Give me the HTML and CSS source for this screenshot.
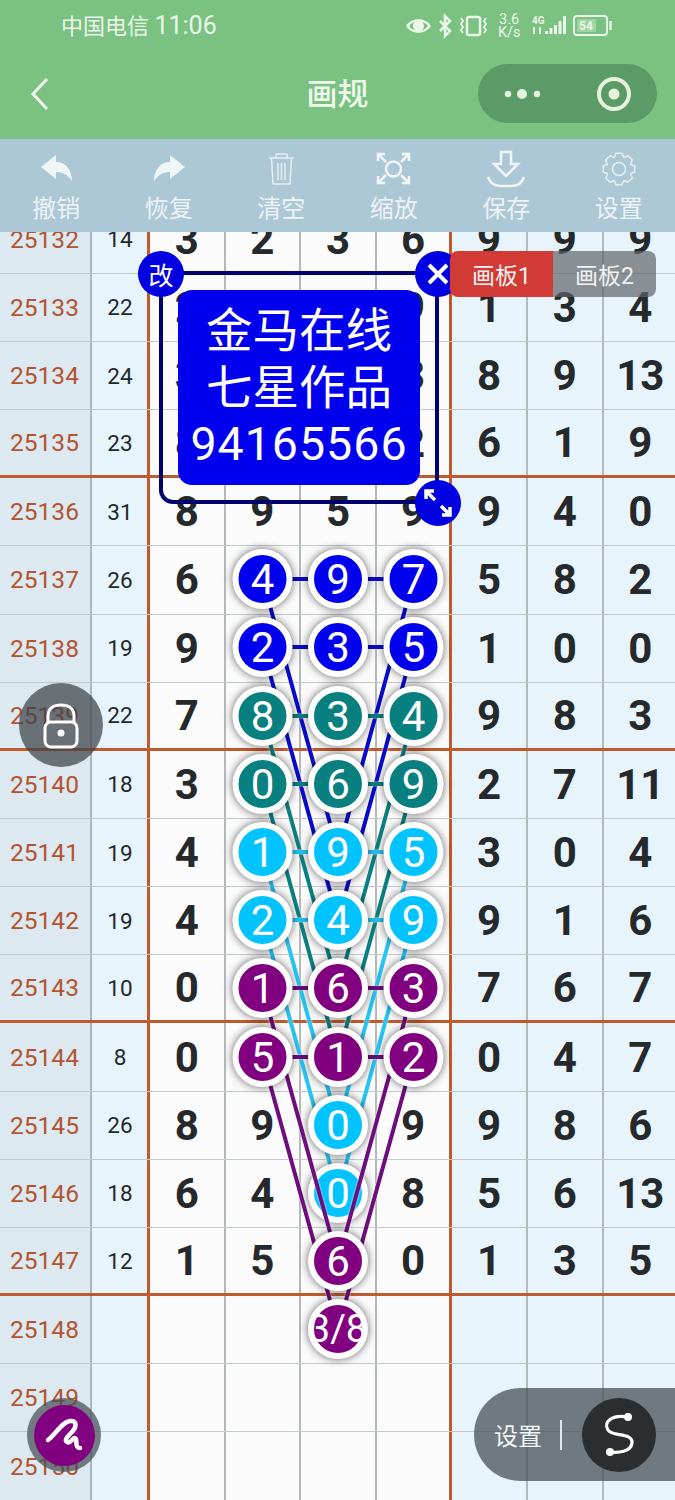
FILE: index.html
```html
<!DOCTYPE html>
<html lang="zh-CN">
<head>
<meta charset="utf-8">
<title>画规</title>
<link rel="stylesheet" href="styles.css">
</head>
<body>
<div class="app">
  <header class="head">
    <div class="status">
      <span class="carrier">中国电信 <span class="time">11:06</span></span>
      <svg class="status-icons" width="215" height="28" viewBox="405 11 215 28">
        <path class="si-fill" d="M408 25C413 16 428 16 433 25C428 34 413 34 408 25ZM411 25C415 31 426 31 430 25C426 19 415 19 411 25Z"/>
        <circle class="si-fill" cx="420.5" cy="25" r="5.5"/>
        <path class="si-line" d="M442 20L452 30L447 35V15L452 20L442 30"/>
        <rect class="si-line" x="469" y="16" width="13" height="18" rx="2"/>
        <path class="si-thin" d="M463 17l2 3-2 3 2 3-2 3 2 3M488 17l-2 3 2 3-2 3 2 3-2 3"/>
        <text class="si-text" x="501" y="23">3.6</text>
        <text class="si-text" x="500" y="36">K/s</text>
        <text class="si-tiny" x="534" y="23">4G</text>
        <path class="si-thin" d="M536 26v7M542 26v7"/>
        <path class="si-bars" d="M548.500 33v-3M553 33v-6M557.500 33v-9M562 33v-13M566.500 33v-18"/>
        <rect class="si-thin" x="576" y="15" width="33" height="19" rx="3"/>
        <rect class="si-batt" x="579" y="18" width="19" height="13" rx="1"/>
        <text class="si-tiny batt-num" x="581" y="29">54</text>
        <path class="si-line" d="M612.500 20v9"/>
      </svg>
    </div>
    <nav class="nav">
      <svg class="back" width="20" height="36" viewBox="0 0 20 36"><path d="M17 3L3 18L17 33"/></svg>
      <h1 class="title">画规</h1>
      <div class="capsule">
        <svg class="dots" width="40" height="14" viewBox="0 0 40 14">
          <circle cx="5" cy="7" r="3.200"/><circle cx="19" cy="7" r="5"/><circle cx="34" cy="7" r="3.200"/>
        </svg>
        <svg class="target" width="36" height="36" viewBox="0 0 36 36">
          <circle class="target-ring" cx="18" cy="18" r="15"/><circle class="target-dot" cx="18" cy="18" r="5.500"/>
        </svg>
      </div>
    </nav>
  </header>

  <div class="toolbar">
    <div class="tool">
      <svg width="40" height="38" viewBox="36 150 40 38"><path class="ti-fill" d="M41 167L56 155V162C66 162 72 170 72 181C67 174 62 172 56 172V179Z"/></svg>
      <span>撤销</span>
    </div>
    <div class="tool">
      <svg width="40" height="38" viewBox="148 150 40 38"><path class="ti-fill" d="M184 167L169 155V162C159 162 153 170 153 181C158 174 163 172 169 172V179Z"/></svg>
      <span>恢复</span>
    </div>
    <div class="tool">
      <svg width="40" height="38" viewBox="261 150 40 38"><path class="ti-thin" d="M269 158H294M276 158V154H287V158M271.500 158L273 184H290L291.500 158M278 163V180M281.500 163V180M285 163V180"/></svg>
      <span>清空</span>
    </div>
    <div class="tool">
      <svg width="40" height="38" viewBox="374 150 40 38"><circle class="ti-line" cx="393.500" cy="169" r="7.500"/><path class="ti-line" d="M378 161V154H385M378 154L386 162M409 161V154H402M409 154L401 162M378 176V183H385M378 183L386 175M409 176V183H402M409 183L401 175"/></svg>
      <span>缩放</span>
    </div>
    <div class="tool">
      <svg width="40" height="38" viewBox="486 150 40 38"><path class="ti-line" d="M501 152H511V164H518L506 176L494 164H501Z"/><path class="ti-line" d="M488 177C490 183 495 186 501 186H511C517 186 522 183 524 177"/></svg>
      <span>保存</span>
    </div>
    <div class="tool">
      <svg width="40" height="38" viewBox="-20 -19 40 38"><path class="ti-thin" d="M-3.050 -15.700L3.050 -15.700L4.780 -11.550L8.950 -13.260L13.260 -8.950L11.550 -4.780L15.700 -3.050L15.700 3.050L11.550 4.780L13.260 8.950L8.950 13.260L4.780 11.550L3.050 15.700L-3.050 15.700L-4.780 11.550L-8.950 13.260L-13.260 8.950L-11.550 4.780L-15.700 3.050L-15.700 -3.050L-11.550 -4.780L-13.260 -8.950L-8.950 -13.260L-4.780 -11.550Z"/><circle class="ti-thin" cx="0" cy="0" r="6.500"/></svg>
      <span>设置</span>
    </div>
  </div>

  <main class="board">
    <div class="rows">
      <div class="row"><div class="id">25132</div><div class="sum">14</div><div class="n">3</div><div class="n">2</div><div class="n">3</div><div class="n end">6</div><div class="n">9</div><div class="n">9</div><div class="n">9</div></div>
      <div class="row"><div class="id">25133</div><div class="sum">22</div><div class="n">2</div><div class="n">5</div><div class="n">7</div><div class="n end">9</div><div class="n">1</div><div class="n">3</div><div class="n">4</div></div>
      <div class="row"><div class="id">25134</div><div class="sum">24</div><div class="n">3</div><div class="n">1</div><div class="n">4</div><div class="n end">3</div><div class="n">8</div><div class="n">9</div><div class="n">13</div></div>
      <div class="row major"><div class="id">25135</div><div class="sum">23</div><div class="n">8</div><div class="n">0</div><div class="n">6</div><div class="n end">2</div><div class="n">6</div><div class="n">1</div><div class="n">9</div></div>
      <div class="row"><div class="id">25136</div><div class="sum">31</div><div class="n">8</div><div class="n">9</div><div class="n">5</div><div class="n end">9</div><div class="n">9</div><div class="n">4</div><div class="n">0</div></div>
      <div class="row"><div class="id">25137</div><div class="sum">26</div><div class="n">6</div><div class="n">4</div><div class="n">9</div><div class="n end">7</div><div class="n">5</div><div class="n">8</div><div class="n">2</div></div>
      <div class="row"><div class="id">25138</div><div class="sum">19</div><div class="n">9</div><div class="n">2</div><div class="n">3</div><div class="n end">5</div><div class="n">1</div><div class="n">0</div><div class="n">0</div></div>
      <div class="row major"><div class="id">25139</div><div class="sum">22</div><div class="n">7</div><div class="n">8</div><div class="n">3</div><div class="n end">4</div><div class="n">9</div><div class="n">8</div><div class="n">3</div></div>
      <div class="row"><div class="id">25140</div><div class="sum">18</div><div class="n">3</div><div class="n">0</div><div class="n">6</div><div class="n end">9</div><div class="n">2</div><div class="n">7</div><div class="n">11</div></div>
      <div class="row"><div class="id">25141</div><div class="sum">19</div><div class="n">4</div><div class="n">1</div><div class="n">9</div><div class="n end">5</div><div class="n">3</div><div class="n">0</div><div class="n">4</div></div>
      <div class="row"><div class="id">25142</div><div class="sum">19</div><div class="n">4</div><div class="n">2</div><div class="n">4</div><div class="n end">9</div><div class="n">9</div><div class="n">1</div><div class="n">6</div></div>
      <div class="row major"><div class="id">25143</div><div class="sum">10</div><div class="n">0</div><div class="n">1</div><div class="n">6</div><div class="n end">3</div><div class="n">7</div><div class="n">6</div><div class="n">7</div></div>
      <div class="row"><div class="id">25144</div><div class="sum">8</div><div class="n">0</div><div class="n">5</div><div class="n">1</div><div class="n end">2</div><div class="n">0</div><div class="n">4</div><div class="n">7</div></div>
      <div class="row"><div class="id">25145</div><div class="sum">26</div><div class="n">8</div><div class="n">9</div><div class="n">0</div><div class="n end">9</div><div class="n">9</div><div class="n">8</div><div class="n">6</div></div>
      <div class="row"><div class="id">25146</div><div class="sum">18</div><div class="n">6</div><div class="n">4</div><div class="n">0</div><div class="n end">8</div><div class="n">5</div><div class="n">6</div><div class="n">13</div></div>
      <div class="row major"><div class="id">25147</div><div class="sum">12</div><div class="n">1</div><div class="n">5</div><div class="n">6</div><div class="n end">0</div><div class="n">1</div><div class="n">3</div><div class="n">5</div></div>
      <div class="row"><div class="id">25148</div><div class="sum"></div><div class="n"></div><div class="n"></div><div class="n"></div><div class="n end"></div><div class="n"></div><div class="n"></div><div class="n"></div></div>
      <div class="row"><div class="id">25149</div><div class="sum"></div><div class="n"></div><div class="n"></div><div class="n"></div><div class="n end"></div><div class="n"></div><div class="n"></div><div class="n"></div></div>
      <div class="row"><div class="id">25150</div><div class="sum"></div><div class="n"></div><div class="n"></div><div class="n"></div><div class="n end"></div><div class="n"></div><div class="n"></div><div class="n"></div></div>
    </div>
  </main>

  <svg class="diagram" width="675" height="1500" viewBox="0 0 675 1500">
    <defs>
      <clipPath id="clip38"><circle cx="338" cy="1329" r="24.500"/></clipPath>
    </defs>

    <g class="lines blue-l">
      <path d="M262.500 579H413.500M262.500 647H413.500M262.500 579L338 852M413.500 579L338 852M262.500 647L338 920M413.500 647L338 920"/>
    </g>
    <g class="nodes blue">
      <g><circle cx="262.500" cy="579" r="27"/><text x="262.500" y="579">4</text></g>
      <g><circle cx="338" cy="579" r="27"/><text x="338" y="579">9</text></g>
      <g><circle cx="413.500" cy="579" r="27"/><text x="413.500" y="579">7</text></g>
      <g><circle cx="262.500" cy="647" r="27"/><text x="262.500" y="647">2</text></g>
      <g><circle cx="338" cy="647" r="27"/><text x="338" y="647">3</text></g>
      <g><circle cx="413.500" cy="647" r="27"/><text x="413.500" y="647">5</text></g>
    </g>

    <g class="lines teal-l">
      <path d="M262.500 716H413.500M262.500 784H413.500M262.500 716L338 988M413.500 716L338 988M262.500 784L338 1057M413.500 784L338 1057"/>
    </g>
    <g class="nodes teal">
      <g><circle cx="262.500" cy="716" r="27"/><text x="262.500" y="716">8</text></g>
      <g><circle cx="338" cy="716" r="27"/><text x="338" y="716">3</text></g>
      <g><circle cx="413.500" cy="716" r="27"/><text x="413.500" y="716">4</text></g>
      <g><circle cx="262.500" cy="784" r="27"/><text x="262.500" y="784">0</text></g>
      <g><circle cx="338" cy="784" r="27"/><text x="338" y="784">6</text></g>
      <g><circle cx="413.500" cy="784" r="27"/><text x="413.500" y="784">9</text></g>
    </g>

    <g class="lines cyan-l">
      <path d="M262.500 852H413.500M262.500 920H413.500M262.500 852L338 1125M413.500 852L338 1125M262.500 920L338 1193M413.500 920L338 1193"/>
    </g>
    <g class="nodes cyan">
      <g><circle cx="262.500" cy="852" r="27"/><text x="262.500" y="852">1</text></g>
      <g><circle cx="338" cy="852" r="27"/><text x="338" y="852">9</text></g>
      <g><circle cx="413.500" cy="852" r="27"/><text x="413.500" y="852">5</text></g>
      <g><circle cx="262.500" cy="920" r="27"/><text x="262.500" y="920">2</text></g>
      <g><circle cx="338" cy="920" r="27"/><text x="338" y="920">4</text></g>
      <g><circle cx="413.500" cy="920" r="27"/><text x="413.500" y="920">9</text></g>
      <g><circle cx="338" cy="1125" r="27"/><text x="338" y="1125">0</text></g>
      <g><circle cx="338" cy="1193" r="27"/><text x="338" y="1193">0</text></g>
    </g>

    <g class="lines purple-l">
      <path d="M262.500 988H413.500M262.500 1057H413.500M262.500 988L338 1261M413.500 988L338 1261M262.500 1057L338 1329M413.500 1057L338 1329"/>
    </g>
    <g class="nodes purple">
      <g><circle cx="262.500" cy="988" r="27"/><text x="262.500" y="988">1</text></g>
      <g><circle cx="338" cy="988" r="27"/><text x="338" y="988">6</text></g>
      <g><circle cx="413.500" cy="988" r="27"/><text x="413.500" y="988">3</text></g>
      <g><circle cx="262.500" cy="1057" r="27"/><text x="262.500" y="1057">5</text></g>
      <g><circle cx="338" cy="1057" r="27"/><text x="338" y="1057">1</text></g>
      <g><circle cx="413.500" cy="1057" r="27"/><text x="413.500" y="1057">2</text></g>
      <g><circle cx="338" cy="1261" r="27"/><text x="338" y="1261">6</text></g>
      <g><circle cx="338" cy="1329" r="27"/><text class="frac" x="338" y="1329" clip-path="url(#clip38)">3/8</text></g>
    </g>
  </svg>

  <section class="selection">
    <div class="notice">金马在线<br>七星作品<br><span class="notice-num">94165566</span></div>
    <div class="handle h-edit">改</div>
    <div class="handle h-close">
      <svg width="24" height="24" viewBox="0 0 24 24"><path d="M3 3L21 21M21 3L3 21"/></svg>
    </div>
    <div class="handle h-size">
      <svg width="30" height="30" viewBox="0 0 30 30"><path d="M3 3L12 12M3 11V3H11M27 27L18 18M27 19V27H19"/></svg>
    </div>
  </section>

  <div class="tabs">
    <div class="tab on">画板1</div>
    <div class="tab">画板2</div>
  </div>

  <div class="lock">
    <svg width="40" height="48" viewBox="0 0 40 48"><path class="lock-s" d="M7 20V14C7 6 13 3 20 3C27 3 33 6 33 14V20"/><rect class="lock-s" x="4" y="20" width="32" height="25" rx="6"/><circle class="lock-d" cx="20" cy="31" r="3.500"/></svg>
  </div>

  <div class="pen">
    <div class="pen-in">
      <svg width="40" height="36" viewBox="44 1418 40 36"><path d="M48 1441C55 1436 62 1423 70 1422C77 1421 77 1428 72 1433C68 1437 64 1441 67 1443C71 1446 73 1436 76 1440C77 1444 75 1449 80 1449"/></svg>
    </div>
  </div>

  <div class="pill">
    <span class="pill-label">设置</span>
    <i class="pill-sep"></i>
    <div class="pill-btn">
      <svg width="50" height="50" viewBox="594 1410 50 50"><path d="M628 1417C612 1414 603 1422 608 1430C612 1437 633 1432 632 1443C631 1452 618 1453 610 1452"/><circle cx="628" cy="1417" r="4"/><circle cx="610" cy="1452" r="4"/></svg>
    </div>
  </div>
</div>
</body>
</html>
```

FILE: styles.css
```css
* { box-sizing: border-box; }
html, body { margin: 0; padding: 0; }
body { font-family: Roboto, "Noto Sans CJK SC", sans-serif; background: #fff; }

.app { position: relative; width: 675px; height: 1500px; overflow: hidden; display: flex; flex-direction: column; }

/* header */
.head { height: 139px; background: #7ac182; color: #eaf6e8; flex: none; }
.status { height: 52px; padding: 0 57px 0 61px; display: flex; align-items: center; justify-content: space-between; }
.carrier { font-size: 22px; line-height: 28px; }
.time { font-size: 25px; }
.status-icons { margin-top: -1px; }
.si-fill { fill: #eaf6e8; fill-rule: evenodd; }
.si-line { fill: none; stroke: #eaf6e8; stroke-width: 2.500; }
.si-thin { fill: none; stroke: #eaf6e8; stroke-width: 1.800; }
.si-bars { fill: none; stroke: #eaf6e8; stroke-width: 3; }
.si-batt { fill: rgba(234, 246, 232, .35); }
.si-text { fill: #eaf6e8; font-size: 14.500px; }
.si-tiny { fill: #eaf6e8; font-size: 10px; font-weight: 700; }
.batt-num { font-size: 12px; }

.nav { position: relative; height: 87px; display: flex; align-items: center; justify-content: center; padding-bottom: 2px; }
.back { position: absolute; left: 30px; top: 24px; }
.back path { fill: none; stroke: #f0f8ec; stroke-width: 3; }
.title { margin: 0; font-size: 31px; font-weight: 500; line-height: 40px; color: #eff8ec; }
.capsule { position: absolute; left: 478px; top: 12px; width: 179px; height: 59px; border-radius: 30px; background: #5b9b68; display: flex; align-items: center; padding-left: 25px; gap: 53px; }
.dots circle { fill: #e6f2dc; }
.target-ring { fill: none; stroke: #e6f2dc; stroke-width: 4; }
.target-dot { fill: #e6f2dc; }

/* toolbar */
.toolbar { height: 93px; flex: none; background: #acc7d5; border-top: 1px solid #b1bfd6; display: flex; position: relative; z-index: 3; padding-top: 10px; }
.tool { width: 112.500px; display: flex; flex-direction: column; align-items: center; color: #edf3f7; font-size: 24px; line-height: 30px; }
.tool svg { display: block; margin-bottom: 6px; }
.ti-fill { fill: #f0f5f8; }
.ti-line { fill: none; stroke: #f0f5f8; stroke-width: 2.500; }
.ti-thin { fill: none; stroke: #e6eef3; stroke-width: 1.500; stroke-linejoin: round; }

/* grid */
.board { flex: 1; overflow: hidden; }
.rows { margin-top: -26.400px; }
.row { height: 68.170px; display: grid; grid-template-columns: 92px 58px repeat(7, 75.600px); border-bottom: 1px solid #c2c8cb; }
.row.major { border-bottom: 3px solid #bf5a2e; }
.row > div { display: flex; align-items: center; justify-content: center; }
.id { background: #dde9f0; color: #b4532f; font-size: 24.500px; border-right: 2px solid #a6b8c2; padding-right: 1px; }
.sum { background: #e8f4fb; color: #23282b; font-size: 22.500px; border-right: 3px solid #bf5a2e; padding-left: 1px; }
.n { background: #e8f4fb; color: #25292c; font-size: 42px; font-weight: 700; border-right: 2px solid #b3b9bb; }
.id + .sum + .n, .sum + .n + .n, .sum + .n + .n + .n, .n.end { background: #fbfbfb; }
.n.end { border-right: 3px solid #bf5a2e; }

/* diagram */
.diagram { position: absolute; left: 0; top: 0; pointer-events: none; }
.lines path { fill: none; stroke-width: 4; }
.lines { filter: drop-shadow(0 0 1px rgba(255, 255, 255, .9)); }
.blue-l path { stroke: #0a0acc; }
.teal-l path { stroke: #0c8080; }
.cyan-l path { stroke: #28c4f2; }
.purple-l path { stroke: #6c0f7c; }
.nodes circle { stroke: #fff; stroke-width: 6; filter: drop-shadow(0 0 4px rgba(0, 0, 0, .6)); }
.nodes text { fill: #fff; font-size: 42px; text-anchor: middle; dominant-baseline: central; }
.nodes text.frac { font-size: 38px; }
.blue circle { fill: #0000ee; }
.teal circle { fill: #088080; }
.cyan circle { fill: #00c3ff; }
.purple circle { fill: #800080; }

/* selected text box */
.selection { position: absolute; left: 159px; top: 271px; width: 280px; height: 233px; border: 4px solid #00006e; border-radius: 14px; display: flex; align-items: center; justify-content: center; }
.notice { width: 242px; height: 195px; border-radius: 14px; background: #0000ee; color: #fff; font-size: 46.500px; line-height: 56.500px; text-align: center; padding-top: 13px; white-space: nowrap; }
.notice-num { letter-spacing: 1px; }
.handle { position: absolute; width: 46px; height: 46px; border-radius: 50%; background: #0000e0; color: #fff; display: flex; align-items: center; justify-content: center; font-size: 25px; }
.h-edit { left: -25px; top: -24px; }
.h-close { left: 252px; top: -24px; }
.h-size { left: 252px; top: 205px; }
.handle path { fill: none; stroke: #fff; }
.h-close path { stroke-width: 4; }
.h-size path { stroke-width: 3.500; }

/* tabs */
.tabs { position: absolute; left: 450px; top: 251px; display: flex; font-size: 23px; color: #f2f2f2; }
.tab { width: 103px; height: 46px; display: flex; align-items: center; justify-content: center; background: rgba(95, 100, 105, .7); border-radius: 0 8px 8px 0; }
.tab.on { background: #d13a35; border-radius: 8px 0 0 8px; }

/* floating buttons */
.lock { position: absolute; left: 19px; top: 683px; width: 84px; height: 84px; border-radius: 50%; background: rgba(60, 65, 70, .72); display: flex; align-items: center; justify-content: center; padding-top: 2px; }
.lock-s { fill: none; stroke: #fff; stroke-width: 3; }
.lock-d { fill: #fff; }

.pen { position: absolute; left: 27px; top: 1398px; width: 74px; height: 74px; border-radius: 50%; background: rgba(70, 78, 84, .72); display: flex; align-items: center; justify-content: center; }
.pen-in { width: 61px; height: 61px; border-radius: 50%; background: #800080; display: flex; align-items: center; justify-content: center; }
.pen path { fill: none; stroke: #fff; stroke-width: 4.500; stroke-linecap: round; stroke-linejoin: round; }

.pill { position: absolute; left: 474px; top: 1388px; width: 201px; height: 93px; border-radius: 46.500px 0 0 46.500px; background: rgba(72, 80, 86, .75); display: flex; align-items: center; padding-left: 20px; color: #f2f4f5; font-size: 24px; }
.pill-sep { width: 2px; height: 30px; background: #e4e8ea; margin-left: 18px; }
.pill-btn { position: absolute; left: 108px; top: 10px; width: 74px; height: 74px; border-radius: 50%; background: #2a2e30; display: flex; align-items: center; justify-content: center; }
.pill-btn path { fill: none; stroke: #fff; stroke-width: 3.200; }
.pill-btn circle { fill: #fff; }
```
